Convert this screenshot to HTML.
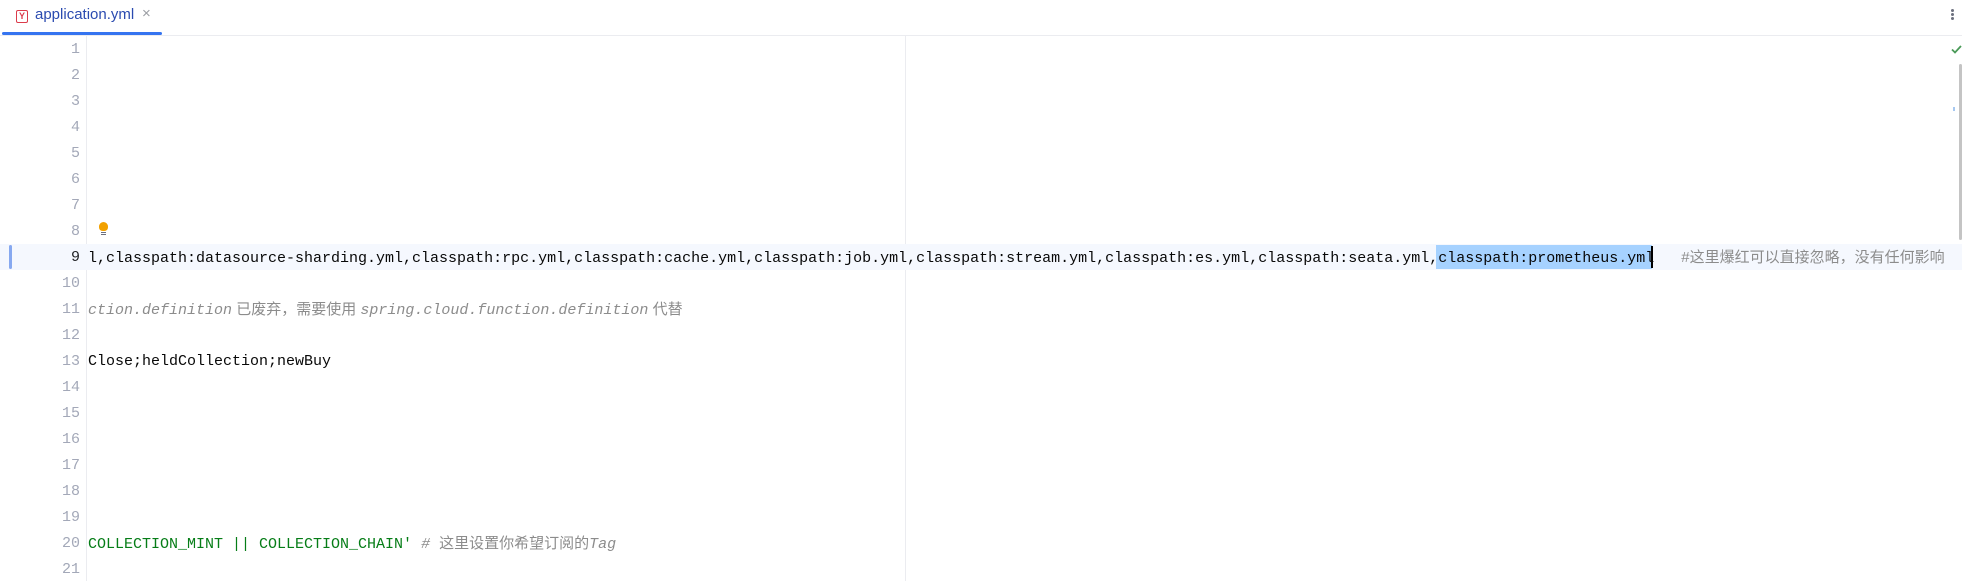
<!DOCTYPE html>
<html><head><meta charset="utf-8"><style>
html,body{margin:0;padding:0;width:1962px;height:581px;overflow:hidden;background:#fff;position:relative}
.a{position:absolute}
.ln{position:absolute;right:0;width:80px;text-align:right;font:15px "Liberation Mono",monospace;color:#a3a8b8;line-height:26px}
.code{position:absolute;left:88px;font:15px "Liberation Mono","Noto Sans CJK SC",monospace;white-space:pre;line-height:26px;color:#080808}
.cm{color:#8c8c8c;font-family:"Liberation Sans","Noto Sans CJK SC",sans-serif}
.it{font-style:italic;color:#8c8c8c}
</style></head><body>
<div class="a" style="left:0;top:35px;width:1962px;height:1px;background:#ebecf0"></div>
<div class="a" style="left:2px;top:32px;width:160px;height:3px;background:#3574f0;border-radius:2px"></div>
<div class="a" style="left:16px;top:10px;width:10px;height:11px;border:1px solid #db3b4b;border-radius:2px;font:bold 9px 'Liberation Sans',sans-serif;color:#db3b4b;text-align:center;line-height:11px">Y</div>
<div class="a" style="left:35px;top:6px;font:15px 'Liberation Sans',sans-serif;color:#2b4bb0">application.yml</div>
<div class="a" style="left:142px;top:5px;font:15px 'Liberation Sans',sans-serif;color:#9a9da3">×</div>
<div class="a" style="left:1951px;top:9px;width:3px;height:3px;background:#6c707e;border-radius:50%;box-shadow:0 4px 0 #6c707e,0 8px 0 #6c707e"></div>
<div class="a" style="left:86px;top:36px;width:1px;height:545px;background:#ebecf0"></div>
<div class="a" style="left:905px;top:36px;width:1px;height:545px;background:#ebecf0"></div>
<div class="a" style="left:0;top:244px;width:1962px;height:26px;background:#f5f8fe"></div>
<div class="a" style="left:9px;top:245px;width:3px;height:24px;background:#87a9f0;border-radius:2px"></div>
<div class="a" style="left:1436px;top:245px;width:216px;height:24px;background:#a6d2ff"></div>
<div class="a" style="left:1651px;top:246px;width:2px;height:22px;background:#000"></div>
<div class="a" style="left:0;top:37px;width:80px;height:546px">
<div class="ln" style="top:0">1</div><div class="ln" style="top:26px">2</div><div class="ln" style="top:52px">3</div><div class="ln" style="top:78px">4</div><div class="ln" style="top:104px">5</div><div class="ln" style="top:130px">6</div><div class="ln" style="top:156px">7</div><div class="ln" style="top:182px">8</div><div class="ln" style="top:208px;color:#1e1f22">9</div><div class="ln" style="top:234px">10</div><div class="ln" style="top:260px">11</div><div class="ln" style="top:286px">12</div><div class="ln" style="top:312px">13</div><div class="ln" style="top:338px">14</div><div class="ln" style="top:364px">15</div><div class="ln" style="top:390px">16</div><div class="ln" style="top:416px">17</div><div class="ln" style="top:442px">18</div><div class="ln" style="top:468px">19</div><div class="ln" style="top:494px">20</div><div class="ln" style="top:520px">21</div>
</div>
<div class="a" style="left:99px;top:222px;width:9px;height:9px;background:#f2a100;border-radius:50% 50% 40% 40%"></div>
<div class="a" style="left:101px;top:232px;width:5px;height:1px;background:#6c707e;box-shadow:0 2px 0 #6c707e"></div>
<div class="code" style="top:245px">l,classpath:datasource-sharding.yml,classpath:rpc.yml,classpath:cache.yml,classpath:job.yml,classpath:stream.yml,classpath:es.yml,classpath:seata.yml,classpath:prometheus.yml   <span class="cm">#这里爆红可以直接忽略，没有任何影响</span></div>
<div class="code" style="top:297px"><span class="it">ction.definition</span><span class="cm"> 已废弃，需要使用 </span><span class="it">spring.cloud.function.definition</span><span class="cm"> 代替</span></div>
<div class="code" style="top:349px">Close;heldCollection;newBuy</div>
<div class="code" style="top:531px;color:#067d17">COLLECTION_MINT || COLLECTION_CHAIN' <span class="it"># </span><span class="cm">这里设置你希望订阅的</span><span class="it">Tag</span></div>
<svg class="a" style="left:1951px;top:45px" width="11" height="9"><path d="M1 4.5L4 7.5L10 1" stroke="#4a9a58" stroke-width="1.8" fill="none"/></svg>
<div class="a" style="left:1959px;top:64px;width:3px;height:176px;background:#c4c4c4;border-radius:2px"></div>
<div class="a" style="left:1953px;top:107px;width:2px;height:4px;background:#a6c8f0"></div>
</body></html>
